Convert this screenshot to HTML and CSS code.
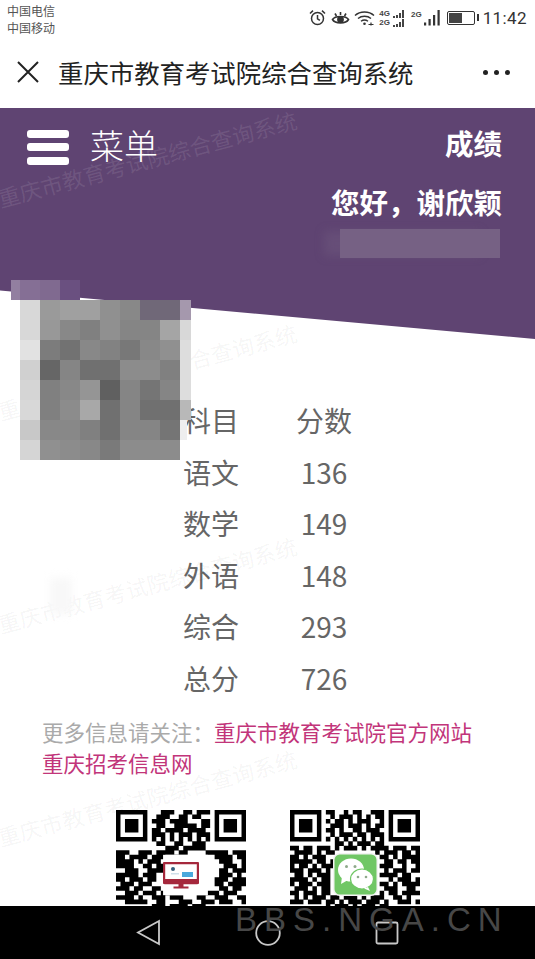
FILE: index.html
```html
<!DOCTYPE html>
<html lang="zh-CN">
<head>
  <meta charset="UTF-8">
  <title>重庆市教育考试院综合查询系统</title>
  <link rel="stylesheet" href="styles.css">
</head>
<body>
  <div class="phone">
    <!-- status bar -->
    <div class="status-bar">
      <div class="carriers">
        <span>中国电信</span>
        <span>中国移动</span>
      </div>
      <div class="status-icons">
        <svg class="icon-alarm" width="17" height="17" viewBox="0 0 17 17" fill="none" stroke="#333" stroke-width="1.5">
          <circle cx="8.5" cy="9.5" r="6"/>
          <path d="M8.5 6v3.8l2.4 1.6M1 4.5 4 1.6M16 4.5 13 1.6"/>
        </svg>
        <svg class="icon-eye" width="19" height="16" viewBox="0 0 19 16" fill="none" stroke="#333" stroke-width="1.6">
          <path d="M1.5 9.5C4 5.5 15 5.5 17.5 9.5 15 14 4 14 1.500 9.500z"/>
          <circle cx="9.500" cy="9.500" r="2.600" fill="#333"/>
          <path d="M4 3.500 5.500 6M15 3.500 13.500 6M9.500 2v3"/>
        </svg>
        <svg class="icon-wifi" width="21" height="16" viewBox="0 0 21 16" fill="none" stroke="#333" stroke-width="1.400">
          <path d="M1 5.500C6 .8 15 .8 20 5.500M4 8.500c3.500-3 9.500-3 13 0M7 11.300c2-1.500 5-1.500 7 0"/>
          <circle cx="10.500" cy="13.800" r="1.300" fill="#333" stroke="none"/>
          <path d="M14.500 14.500h5M17 12.500v3" stroke-width="1.200"/>
        </svg>
        <div class="sim-pair">
          <div class="sim-row"><span class="sim-tag">4G</span><span class="bars-small"><i class="b1"></i><i class="b2"></i><i class="b3"></i><i class="b4"></i></span></div>
          <div class="sim-row"><span class="sim-tag">2G</span><span class="bars-small"><i class="b1"></i><i class="b2"></i><i class="b3"></i><i class="b4"></i></span></div>
        </div>
        <div class="sim-single">
          <span class="sim-tag">2G</span>
          <svg width="17" height="16" viewBox="0 0 17 16" fill="#333">
            <rect x="0" y="12.500" width="2.200" height="3"/>
            <rect x="4.500" y="9" width="2.200" height="6.500"/>
            <rect x="9" y="5" width="2.200" height="10.500"/>
            <rect x="13.500" y="0" width="2.200" height="15.500"/>
          </svg>
        </div>
        <div class="battery"><div class="battery-level"></div></div>
        <span class="clock">11:42</span>
      </div>
    </div>

    <!-- wechat title bar -->
    <div class="title-bar">
      <svg class="close-icon" width="24" height="24" viewBox="0 0 24 24" fill="none" stroke="#222" stroke-width="2">
        <path d="M2 2 22 22M22 2 2 22"/>
      </svg>
      <div class="page-title">重庆市教育考试院综合查询系统</div>
      <div class="more-dots"><i></i><i></i><i></i></div>
    </div>

    <!-- purple header -->
    <div class="hero">
      <div class="hero-menu">
        <div class="burger"><i></i><i></i><i></i></div>
        <span class="menu-label">菜单</span>
      </div>
      <div class="hero-user">
        <div class="hero-line">成绩</div>
        <div class="hero-line">您好&#xFF0C;谢欣颖</div>
        <div class="blur-id"></div>
      </div>
    </div>

    <!-- scores -->
    <div class="content">
      <div class="score-table">
        <div class="score-row"><span>科目</span><span>分数</span></div>
        <div class="score-row"><span>语文</span><span>136</span></div>
        <div class="score-row"><span>数学</span><span>149</span></div>
        <div class="score-row"><span>外语</span><span>148</span></div>
        <div class="score-row"><span>综合</span><span>293</span></div>
        <div class="score-row"><span>总分</span><span>726</span></div>
      </div>
      <p class="more-info">更多信息请关注&#xFF1A;<a href="#">重庆市教育考试院官方网站</a><br><a href="#">重庆招考信息网</a></p>
      <div class="qr-row">
        <div class="qr">
          <svg width="130" height="130" viewBox="0 0 29 29">
            <path fill="#000" fill-rule="evenodd" d="M0 0h7v7h-7zM1 1v5h5v-5zM2 2h3v3h-3zM22 0h7v7h-7zM23 1v5h5v-5zM24 2h3v3h-3zM0 22h7v7h-7z"/>
            <path stroke="#000" stroke-width="1.020" d="M10 .5h3M15 .5h2M18 .5h3M9 1.500h3M14 1.500h2M17 1.500h2M8 2.500h3M12 2.500h4M19 2.500h2M9 3.500h2M13 3.500h5M19 3.500h2M8 4.500h2M11 4.500h4M16 4.500h4M8 5.500h3M12 5.500h1M14 5.500h3M18 5.500h3M8 6.500h1M10 6.500h1M12 6.500h1M14 6.500h1M16 6.500h1M18 6.500h1M20 6.500h1M9 7.500h2M13 7.500h2M17 7.500h3M11 8.500h3M15 8.500h5M0 9.500h3M5 9.500h3M9 9.500h4M14 9.500h2M20 9.500h5M26 9.500h3M0 10.500h2M3 10.500h4M8 10.500h3M13 10.500h1M22 10.500h4M27 10.500h2M0 11.500h4M5 11.500h1M7 11.500h3M23 11.500h3M28 11.500h1M0 12.500h4M6 12.500h2M9 12.500h2M24 12.500h3M28 12.500h1M2 13.500h3M7 13.500h4M23 13.500h2M26 13.500h3M0 14.500h5M6 14.500h3M23 14.500h3M27 14.500h1M0 15.500h2M3 15.500h3M7 15.500h2M22 15.500h3M26 15.500h3M1 16.500h3M5 16.500h3M22 16.500h2M25 16.500h4M0 17.500h3M4 17.500h2M8 17.500h2M23 17.500h2M26 17.500h2M2 18.500h3M6 18.500h3M10 18.500h2M20 18.500h3M24 18.500h3M0 19.500h4M5 19.500h1M8 19.500h3M12 19.500h3M18 19.500h2M22 19.500h3M27 19.500h2M2 20.500h5M9 20.500h2M14 20.500h3M19 20.500h3M23 20.500h3M28 20.500h1M8 21.500h3M12 21.500h4M17 21.500h3"/>
            <rect x="10.500" y="10" width="10" height="9" fill="#fff"/>
          </svg>
          <svg class="qr-logo site-logo" width="36" height="28" viewBox="0 0 36 28">
            <rect x="1" y="1" width="34" height="20" rx="1" fill="#fff" stroke="#a5283c" stroke-width="2.400"/>
            <rect x="0" y="17" width="36" height="4.500" rx="1" fill="#a5283c"/>
            <path d="M15.500 21.500h5v3h-5zM10.500 24.500h15v2h-15z" fill="#a5283c"/>
            <circle cx="10" cy="7" r="2" fill="#35607e"/>
            <rect x="19" y="10" width="11" height="5" fill="#4aa9dc"/>
            <rect x="8" y="11" width="8" height="1.500" fill="#cfe0ea"/>
          </svg>
        </div>
        <div class="qr">
          <svg width="130" height="130" viewBox="0 0 29 29">
            <path fill="#000" fill-rule="evenodd" d="M0 0h7v7h-7zM1 1v5h5v-5zM2 2h3v3h-3zM22 0h7v7h-7zM23 1v5h5v-5zM24 2h3v3h-3zM0 22h7v7h-7z"/>
            <path stroke="#000" stroke-width="1.020" d="M8 .5h2M12 .5h1M14 .5h2M18 .5h3M9 1.500h1M11 1.500h3M15 1.500h1M17 1.500h1M19 1.500h2M8 2.500h1M10 2.500h2M13 2.500h1M15 2.500h3M20 2.500h1M9 3.500h3M13 3.500h3M17 3.500h1M19 3.500h2M8 4.500h2M11 4.500h1M14 4.500h2M17 4.500h3M9 5.500h1M11 5.500h3M15 5.500h2M18 5.500h3M8 6.500h1M10 6.500h1M12 6.500h1M14 6.500h1M16 6.500h1M18 6.500h1M20 6.500h1M10 7.500h2M13 7.500h1M15 7.500h3M19 7.500h2M0 8.500h2M3 8.500h2M6 8.500h3M10 8.500h1M12 8.500h3M16 8.500h1M18 8.500h4M23 8.500h3M27 8.500h2M1 9.500h4M6 9.500h1M8 9.500h2M19 9.500h1M21 9.500h3M25 9.500h2M28 9.500h1M0 10.500h2M3 10.500h1M5 10.500h3M20 10.500h2M23 10.500h1M25 10.500h4M0 11.500h5M6 11.500h2M9 11.500h1M21 11.500h2M24 11.500h2M27 11.500h2M0 12.500h1M2 12.500h2M5 12.500h1M7 12.500h3M20 12.500h3M25 12.500h1M28 12.500h1M0 13.500h3M4 13.500h3M8 13.500h1M21 13.500h1M23 13.500h3M27 13.500h2M1 14.500h2M4 14.500h1M6 14.500h3M20 14.500h4M25 14.500h2M0 15.500h4M5 15.500h1M7 15.500h2M22 15.500h1M24 15.500h3M28 15.500h1M0 16.500h1M2 16.500h3M6 16.500h3M20 16.500h2M23 16.500h1M25 16.500h4M1 17.500h3M5 17.500h1M7 17.500h2M21 17.500h3M26 17.500h2M0 18.500h2M3 18.500h3M7 18.500h2M20 18.500h1M22 18.500h2M25 18.500h4M1 19.500h1M3 19.500h1M5 19.500h3M9 19.500h2M12 19.500h3M16 19.500h1M18 19.500h3M23 19.500h2M26 19.500h1M0 20.500h3M4 20.500h3M8 20.500h2M11 20.500h1M13 20.500h3M17 20.500h3M21 20.500h1M24 20.500h3M28 20.500h1M8 21.500h1M10 21.500h3M14 21.500h1M16 21.500h3M20 21.500h2"/>
          </svg>
          <svg class="qr-logo wechat-logo" width="45" height="43" viewBox="0 0 45 43">
            <rect x=".75" y=".75" width="43.500" height="41.500" rx="6" fill="#70c765" stroke="#f3f3f3" stroke-width="1.500"/>
            <ellipse cx="18" cy="17" rx="13" ry="11.500" fill="#fff"/>
            <path d="M9 24 8 31 15 27z" fill="#fff"/>
            <ellipse cx="29" cy="26" rx="11.500" ry="10" fill="#fff" stroke="#70c765" stroke-width="1.200"/>
            <path d="M35 34 37 38 31 35.500z" fill="#fff"/>
            <circle cx="13.500" cy="13.500" r="1.500" fill="#8fa98b"/>
            <circle cx="22" cy="13.500" r="1.500" fill="#8fa98b"/>
            <circle cx="25" cy="24" r="1.300" fill="#8fa98b"/>
            <circle cx="33" cy="24" r="1.300" fill="#8fa98b"/>
          </svg>
        </div>
      </div>
    </div>

    <!-- android nav bar -->
    <div class="nav-bar">
      <svg width="25" height="27" viewBox="0 0 25 27" fill="none" stroke="#c8c8c8" stroke-width="1.800">
        <path d="M23 2 2 13.500 23 25z"/>
      </svg>
      <svg width="26" height="26" viewBox="0 0 26 26" fill="none" stroke="#c8c8c8" stroke-width="1.800">
        <circle cx="13" cy="13" r="11.800"/>
      </svg>
      <svg width="24" height="24" viewBox="0 0 24 24" fill="none" stroke="#c8c8c8" stroke-width="1.800">
        <rect x="1.500" y="1.500" width="21" height="21" rx="1.500"/>
      </svg>
    </div>

    <!-- things lying over the page -->
    <div class="marks">
      <div class="mark mark-on-purple">重庆市教育考试院综合查询系统</div>
      <div class="mark">重庆市教育考试院综合查询系统</div>
      <div class="mark">重庆市教育考试院综合查询系统</div>
      <div class="mark">重庆市教育考试院综合查询系统</div>
    </div>
    <div class="smudge"></div>
    <svg class="mosaic" width="180" height="180" viewBox="0 0 180 180">
      <rect x="0" y="0" width="9" height="20" fill="#927fa0"/>
      <rect x="9" y="0" width="20" height="20" fill="#856f95"/>
      <rect x="29" y="0" width="20" height="20" fill="#806a90"/>
      <rect x="49" y="0" width="20" height="20" fill="#6a5080"/>

      <rect x="9" y="20" width="20" height="20" fill="#d8d8d8"/><rect x="29" y="20" width="20" height="20" fill="#9a9a9a"/><rect x="49" y="20" width="20" height="20" fill="#a0a0a0"/><rect x="69" y="20" width="20" height="20" fill="#a0a0a0"/><rect x="89" y="20" width="20" height="20" fill="#909090"/><rect x="109" y="20" width="20" height="20" fill="#888888"/><rect x="129" y="20" width="20" height="20" fill="#706878"/><rect x="149" y="20" width="20" height="20" fill="#706878"/><rect x="169" y="20" width="11" height="20" fill="#a598ad"/>

      <rect x="9" y="40" width="20" height="20" fill="#d8d8d8"/><rect x="29" y="40" width="20" height="20" fill="#989898"/><rect x="49" y="40" width="20" height="20" fill="#888888"/><rect x="69" y="40" width="20" height="20" fill="#808080"/><rect x="89" y="40" width="20" height="20" fill="#909090"/><rect x="109" y="40" width="20" height="20" fill="#858585"/><rect x="129" y="40" width="20" height="20" fill="#858585"/><rect x="149" y="40" width="20" height="20" fill="#a5a5a5"/><rect x="169" y="40" width="11" height="20" fill="#d8d8d8"/>

      <rect x="9" y="60" width="20" height="20" fill="#e2e2e2"/><rect x="29" y="60" width="20" height="20" fill="#7c7c7c"/><rect x="49" y="60" width="20" height="20" fill="#727272"/><rect x="69" y="60" width="20" height="20" fill="#888888"/><rect x="89" y="60" width="20" height="20" fill="#828282"/><rect x="109" y="60" width="20" height="20" fill="#787878"/><rect x="129" y="60" width="20" height="20" fill="#888888"/><rect x="149" y="60" width="20" height="20" fill="#909090"/><rect x="169" y="60" width="11" height="20" fill="#dddddd"/>

      <rect x="9" y="80" width="20" height="20" fill="#d0d0d0"/><rect x="29" y="80" width="20" height="20" fill="#666666"/><rect x="49" y="80" width="20" height="20" fill="#858585"/><rect x="69" y="80" width="20" height="20" fill="#707070"/><rect x="89" y="80" width="20" height="20" fill="#707070"/><rect x="109" y="80" width="20" height="20" fill="#8c8c8c"/><rect x="129" y="80" width="20" height="20" fill="#8c8c8c"/><rect x="149" y="80" width="20" height="20" fill="#808080"/><rect x="169" y="80" width="11" height="20" fill="#dddddd"/>

      <rect x="9" y="100" width="20" height="20" fill="#d5d5d5"/><rect x="29" y="100" width="20" height="20" fill="#808080"/><rect x="49" y="100" width="20" height="20" fill="#888888"/><rect x="69" y="100" width="20" height="20" fill="#959595"/><rect x="89" y="100" width="20" height="20" fill="#606060"/><rect x="109" y="100" width="20" height="20" fill="#858585"/><rect x="129" y="100" width="20" height="20" fill="#757575"/><rect x="149" y="100" width="20" height="20" fill="#858585"/><rect x="169" y="100" width="11" height="20" fill="#dddddd"/>

      <rect x="9" y="120" width="20" height="20" fill="#d8d8d8"/><rect x="29" y="120" width="20" height="20" fill="#808080"/><rect x="49" y="120" width="20" height="20" fill="#8c8c8c"/><rect x="69" y="120" width="20" height="20" fill="#a8a8a8"/><rect x="89" y="120" width="20" height="20" fill="#707070"/><rect x="109" y="120" width="20" height="20" fill="#858585"/><rect x="129" y="120" width="20" height="20" fill="#707070"/><rect x="149" y="120" width="20" height="20" fill="#707070"/><rect x="169" y="120" width="11" height="20" fill="#b8b8b8"/>

      <rect x="9" y="140" width="20" height="20" fill="#c8c8c8"/><rect x="29" y="140" width="20" height="20" fill="#888888"/><rect x="49" y="140" width="20" height="20" fill="#888888"/><rect x="69" y="140" width="20" height="20" fill="#808080"/><rect x="89" y="140" width="20" height="20" fill="#707070"/><rect x="109" y="140" width="20" height="20" fill="#858585"/><rect x="129" y="140" width="20" height="20" fill="#858585"/><rect x="149" y="140" width="20" height="20" fill="#757575"/><rect x="169" y="140" width="7" height="20" fill="#eeeeee"/>

      <rect x="9" y="160" width="20" height="20" fill="#d5d5d5"/><rect x="29" y="160" width="20" height="20" fill="#909090"/><rect x="49" y="160" width="20" height="20" fill="#8c8c8c"/><rect x="69" y="160" width="20" height="20" fill="#888888"/><rect x="89" y="160" width="20" height="20" fill="#7a7a7a"/><rect x="109" y="160" width="20" height="20" fill="#8c8c8c"/><rect x="129" y="160" width="20" height="20" fill="#8c8c8c"/><rect x="149" y="160" width="20" height="20" fill="#8c8c8c"/>
    </svg>
    <div class="forum-mark">BBS.NGA.CN</div>
  </div>
</body>
</html>
```

FILE: styles.css
```css
* {
  box-sizing: border-box;
}

html, body {
  margin: 0;
  padding: 0;
  background-color: #fff;
}

.phone {
  position: relative;
  width: 535px;
  height: 959px;
  overflow: hidden;
  display: flex;
  flex-direction: column;
  background-color: #fff;
  font-family: "Noto Sans CJK SC", "Noto Sans", sans-serif;
}

/* status bar */
.status-bar {
  height: 36px;
  padding: 2px 8px 0 7px;
  display: flex;
  justify-content: space-between;
  align-items: flex-start;
}

.carriers {
  display: flex;
  flex-direction: column;
  font-size: 12px;
  line-height: 17px;
  color: #555;
}

.status-icons {
  display: flex;
  align-items: center;
  height: 31px;
  color: #333;
}

.icon-alarm {
  margin-right: 5px;
}

.icon-eye {
  margin-right: 4px;
}

.icon-wifi {
  margin-right: 4px;
}

.sim-pair {
  display: flex;
  flex-direction: column;
  margin-right: 7px;
}

.sim-row {
  display: flex;
  align-items: flex-end;
  height: 9px;
}

.sim-tag {
  font-family: "Liberation Sans", sans-serif;
  font-size: 8px;
  line-height: 9px;
  font-weight: 700;
  color: #444;
}

.bars-small {
  display: flex;
  align-items: flex-end;
  gap: 1px;
  margin-left: 3px;
}

.bars-small i {
  display: block;
  width: 2px;
  background-color: #444;
}

.bars-small .b1 { height: 2px; }
.bars-small .b2 { height: 3px; }
.bars-small .b3 { height: 5px; }
.bars-small .b4 { height: 8px; }

.sim-single {
  display: flex;
  align-items: flex-start;
  margin-right: 6px;
}

.sim-single svg {
  margin-left: 2px;
}

.battery {
  position: relative;
  width: 28px;
  height: 14px;
  border: 1.5px solid #333;
  border-radius: 2px;
  padding: 1px;
  margin-right: 8px;
}

.battery::after {
  content: "";
  position: absolute;
  right: -5px;
  top: 2px;
  width: 2px;
  height: 7px;
  background-color: #333;
}

.battery-level {
  width: 13px;
  height: 100%;
  background-color: #444;
}

.clock {
  font-family: Roboto, sans-serif;
  font-size: 17px;
  letter-spacing: 0.4px;
  color: #333;
}

/* title bar */
.title-bar {
  height: 72px;
  padding: 0 25px 0 16px;
  display: flex;
  align-items: center;
}

.close-icon {
  margin-right: 18px;
  flex: none;
}

.page-title {
  flex: 1;
  font-size: 25.4px;
  line-height: 72px;
  color: #222;
  white-space: nowrap;
}

.more-dots {
  display: flex;
  gap: 6px;
}

.more-dots i {
  display: block;
  width: 5px;
  height: 5px;
  border-radius: 50%;
  background-color: #222;
}

/* purple header */
.hero {
  height: 231px;
  flex: none;
  padding: 22px 33px 0 27px;
  display: flex;
  justify-content: space-between;
  align-items: flex-start;
  background-color: #5f4472;
  clip-path: polygon(0 0, 100% 0, 100% 100%, 0 79%);
  color: #fff;
}

.hero-menu {
  display: flex;
  align-items: center;
  gap: 21px;
  height: 30px;
}

.burger {
  display: flex;
  flex-direction: column;
  gap: 5.5px;
  width: 42px;
  margin-top: 4px;
}

.burger i {
  display: block;
  height: 8px;
  border-radius: 3px;
  background-color: #fff;
}

.menu-label {
  font-size: 34px;
  line-height: 30px;
  font-weight: 300;
}

.hero-user {
  display: flex;
  flex-direction: column;
  align-items: flex-end;
  margin-top: -2px;
}

.hero-line {
  font-size: 28.5px;
  line-height: 30px;
  height: 30px;
  font-weight: 700;
  margin-bottom: 29px;
  white-space: nowrap;
}

.hero-line + .hero-line {
  margin-bottom: 12px;
}

.blur-id {
  width: 160px;
  height: 29px;
  margin-right: 2px;
  background-color: #766184;
  box-shadow: -18px 0 10px -2px rgba(118, 97, 132, 0.35);
}

/* scores */
.content {
  flex: 1;
  overflow: hidden;
  padding: 56px 42px 0;
}

.score-table {
  margin-left: 141px;
  width: 170px;
}

.score-row {
  display: grid;
  grid-template-columns: 56px 57px 56px;
  height: 51.6px;
  line-height: 51.6px;
  font-size: 28px;
  color: #666;
}

.score-row span:last-child {
  grid-column: 3;
  margin-left: -57px;
  padding-left: 57px;
  text-align: center;
  white-space: nowrap;
}

.more-info {
  margin: 11px 0 0;
  font-size: 21.5px;
  line-height: 31px;
  color: #aaa;
  white-space: nowrap;
}

.more-info a {
  color: #c2357a;
  text-decoration: none;
}

.qr-row {
  margin-top: 32px;
  margin-left: 74px;
  display: flex;
  gap: 44px;
}

.qr {
  position: relative;
  width: 130px;
  height: 130px;
}

.qr > svg {
  display: block;
}

.qr .qr-logo {
  position: absolute;
}

.site-logo {
  left: 47px;
  top: 52px;
}

.wechat-logo {
  left: 43px;
  top: 43px;
}

/* android nav bar */
.nav-bar {
  height: 53px;
  flex: none;
  padding: 0 136px;
  display: flex;
  justify-content: space-between;
  align-items: center;
  background-color: #000;
}

/* overlays */
.marks {
  position: absolute;
  top: 103px;
  left: -7px;
  width: 310px;
  pointer-events: none;
}

.mark {
  height: 213px;
  line-height: 110px;
  font-size: 22px;
  white-space: nowrap;
  color: rgba(0, 0, 0, 0.05);
  transform: rotate(-15deg);
  transform-origin: 155px 55px;
}

.mark-on-purple {
  color: rgba(255, 255, 255, 0.1);
}

.smudge {
  position: absolute;
  left: 50px;
  top: 578px;
  width: 22px;
  height: 36px;
  background-color: #f8f8f8;
  filter: blur(4px);
}

.mosaic {
  position: absolute;
  left: 11px;
  top: 280px;
}

.forum-mark {
  position: absolute;
  left: 235px;
  top: 900px;
  font-family: "Liberation Sans", sans-serif;
  font-size: 33px;
  line-height: 40px;
  letter-spacing: 7px;
  color: #474747;
  white-space: nowrap;
}
```
